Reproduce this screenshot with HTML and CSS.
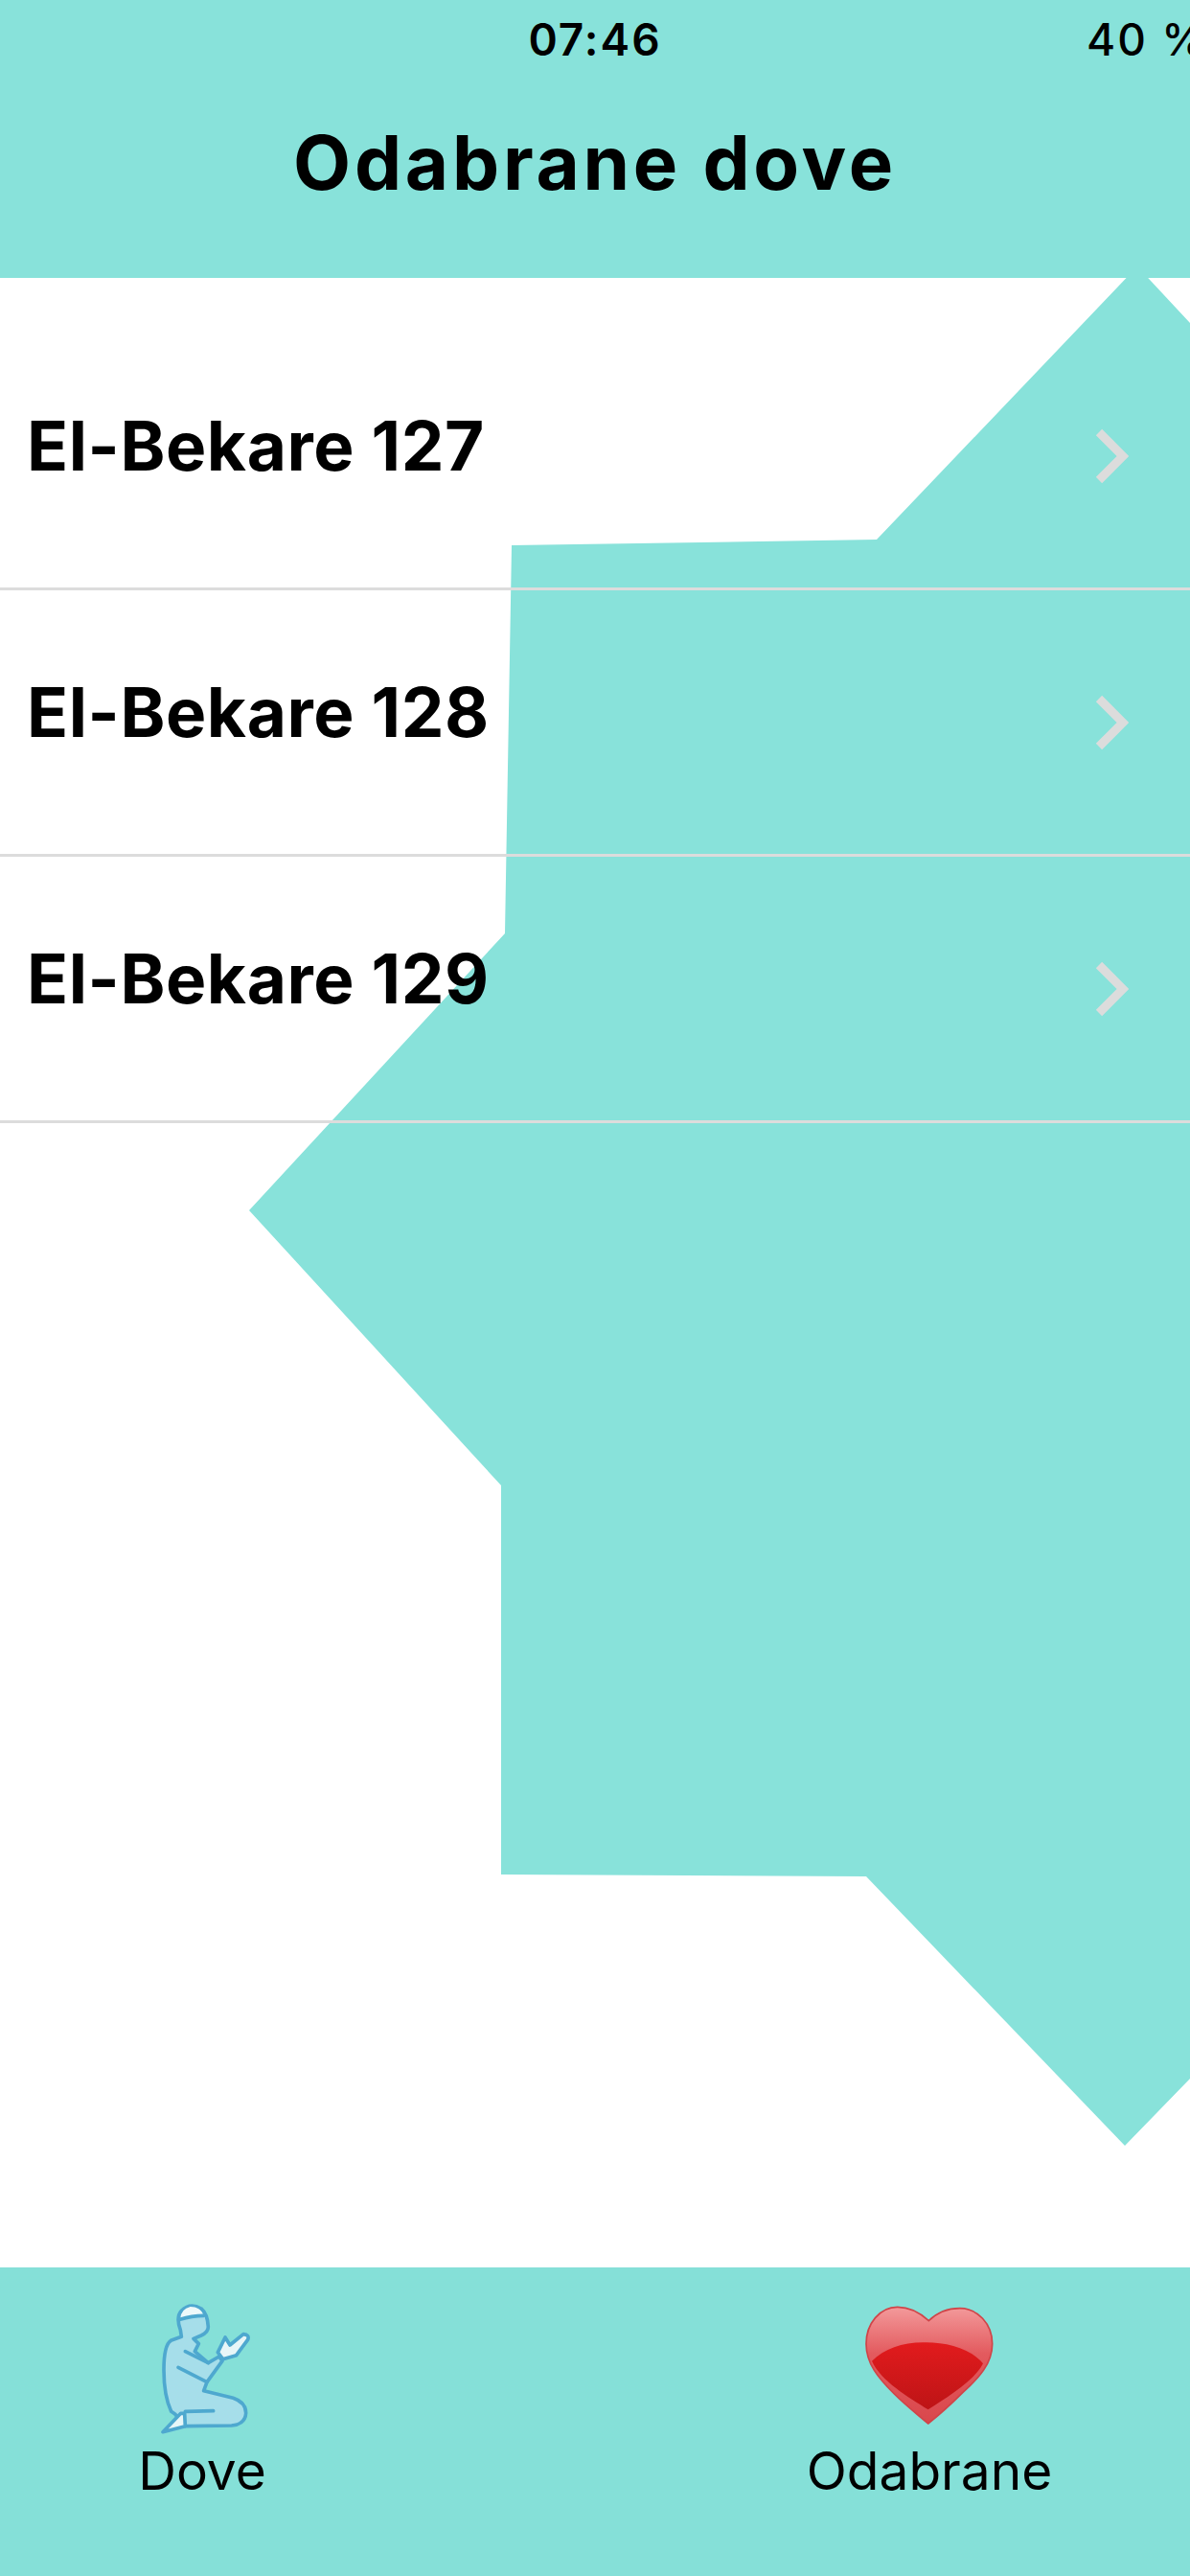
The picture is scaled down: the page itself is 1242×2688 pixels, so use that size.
FILE: index.html
```html
<!DOCTYPE html>
<html lang="hr">
<head>
  <meta charset="UTF-8">
  <title>Odabrane dove</title>
  <link rel="stylesheet" href="styles.css">
</head>
<body>
  <div class="app">
    <header class="top-bar">
      <div class="status">
        <span class="time">07:46</span>
        <span class="battery">40 %</span>
      </div>
      <h1>Odabrane dove</h1>
    </header>

    <main class="content">
      <svg class="star" viewBox="0 0 1242 2076" preserveAspectRatio="none">
        <polygon points="1187,-12 1242,47 1242,1879 1174,1949 904,1668 523,1666 523,1260 260,973 527,684 534,279 915,273" />
      </svg>
      <div class="list">
        <div class="row"><span>El-Bekare 127</span><svg class="chev" viewBox="0 0 36 58"><path d="M5 4 L30 29 L5 54" /></svg></div>
        <div class="row"><span>El-Bekare 128</span><svg class="chev" viewBox="0 0 36 58"><path d="M5 4 L30 29 L5 54" /></svg></div>
        <div class="row"><span>El-Bekare 129</span><svg class="chev" viewBox="0 0 36 58"><path d="M5 4 L30 29 L5 54" /></svg></div>
      </div>
    </main>

    <nav class="tabs">
      <div class="tab">
        <svg class="tab-icon" viewBox="183 130 300 420">
          <g stroke="#4ea8cf" stroke-width="11" stroke-linejoin="round" stroke-linecap="round">
            <path fill="#a6deea" d="M265 215 Q250 175 268 155 Q295 128 330 148 Q350 165 352 205 Q352 222 330 232 L306 242 L322 258 L310 282 L352 318 L386 298 L396 312 L348 378 L338 405 L430 428 Q470 442 470 475 Q468 510 425 514 L280 516 L248 478 L236 470 Q213 420 213 340 Q213 262 235 248 L268 236 Z" />
            <path fill="#e8f6f8" d="M382 285 L405 238 L420 262 L462 228 Q482 230 476 245 L440 294 L398 306 Z" />
            <path fill="#e8f6f8" d="M266 476 L210 534 L280 516 L278 476 Z" />
            <path fill="#eef9fa" stroke="none" d="M266 178 Q266 150 296 142 Q328 142 336 168 Q300 170 266 178 Z" />
            <path fill="none" d="M264 182 Q300 170 338 170" />
            <path fill="none" d="M280 282 L352 318" />
            <path fill="none" d="M258 332 L348 378" />
            <path fill="none" d="M280 470 L368 468" />
          </g>
        </svg>
        <span>Dove</span>
      </div>
      <div class="tab">
        <svg class="tab-icon" viewBox="205 130 490 420">
          <defs>
            <linearGradient id="heartTop" x1="0" y1="0" x2="0" y2="1">
              <stop offset="0" stop-color="#f39a9b" />
              <stop offset="0.4" stop-color="#e35a5e" />
              <stop offset="1" stop-color="#d9474c" />
            </linearGradient>
            <linearGradient id="heartCore" x1="0" y1="0" x2="0" y2="1">
              <stop offset="0" stop-color="#e21b1d" />
              <stop offset="1" stop-color="#bd1416" />
            </linearGradient>
          </defs>
          <path fill="url(#heartTop)" stroke="#d04448" stroke-width="5" d="M448 186 C420 160 385 143 350 143 C295 143 252 195 252 258 C252 320 290 365 340 415 C380 455 420 485 446 508 C475 485 515 450 555 410 C605 365 647 320 647 258 C647 195 600 147 545 147 C510 147 475 160 448 186 Z" />
          <path fill="url(#heartCore)" d="M270 312 C310 272 370 252 440 254 C505 254 578 272 618 320 C590 375 505 425 446 464 C385 425 298 375 270 312 Z" />
        </svg>
        <span>Odabrane</span>
      </div>
    </nav>
  </div>
</body>
</html>
```
FILE: styles.css
```css
* { box-sizing: border-box; }
html, body {
  margin: 0;
  padding: 0;
}
body {
  background-color: #fdfdfd;
  font-family: Inter, 'Liberation Sans', sans-serif;
  color: #000;
}
.app {
  width: 1242px;
  height: 2688px;
  display: flex;
  flex-direction: column;
  overflow: hidden;
}
.top-bar {
  height: 290px;
  flex: none;
  background-color: #88e2da;
  padding-top: 14px;
  position: relative;
  z-index: 1;
}
.status {
  display: flex;
  justify-content: center;
  position: relative;
  font-size: 46px;
  font-weight: 600;
  line-height: 54px;
  letter-spacing: 2px;
  white-space: nowrap;
}
.battery {
  position: absolute;
  left: 1134px;
  top: 0;
  font-weight: 500;
}
.top-bar h1 {
  margin: 56px 0 0;
  text-align: center;
  font-size: 78px;
  font-weight: 700;
  line-height: 92px;
  letter-spacing: 3.8px;
}
.content {
  flex: 1;
  position: relative;
  background-color: #fff;
}
.star {
  position: absolute;
  left: 0;
  top: 0;
  width: 100%;
  height: 100%;
  fill: #88e2da;
}
.list {
  position: relative;
  padding-top: 48px;
}
.row {
  height: 278px;
  border-bottom: 3px solid #dcdcdc;
  display: flex;
  align-items: center;
  justify-content: space-between;
  padding: 0 64px 0 28px;
  font-size: 71px;
  font-weight: 700;
  letter-spacing: 0.6px;
}
.row span {
  position: relative;
  top: -11px;
}
.chev {
  width: 36px;
  height: 58px;
  fill: none;
  stroke: #dcdcdc;
  stroke-width: 9;
}
.tabs {
  height: 322px;
  flex: none;
  background-color: #85e0d8;
  display: flex;
  justify-content: space-between;
  padding: 37px 122px 0 61px;
}
.tab {
  width: 300px;
  display: flex;
  flex-direction: column;
  align-items: center;
  font-size: 55px;
  line-height: 64px;
}
.tab-icon {
  width: 300px;
  height: 140px;
  flex: none;
  margin-bottom: 3px;
  filter: blur(0.5px);
}
```
